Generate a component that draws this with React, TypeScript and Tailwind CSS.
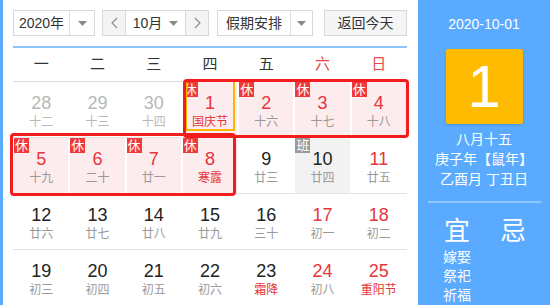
import React from "react";

type Day = {
  n: number;
  lunar: string;
  muted?: boolean;
  red?: boolean;
  lunarRed?: boolean;
  rest?: boolean;
  work?: boolean;
  selected?: boolean;
};

const rows: Day[][] = [
  [
    { n: 28, lunar: "十二", muted: true },
    { n: 29, lunar: "十三", muted: true },
    { n: 30, lunar: "十四", muted: true },
    { n: 1, lunar: "国庆节", red: true, lunarRed: true, rest: true, selected: true },
    { n: 2, lunar: "十六", red: true, rest: true },
    { n: 3, lunar: "十七", red: true, rest: true },
    { n: 4, lunar: "十八", red: true, rest: true },
  ],
  [
    { n: 5, lunar: "十九", red: true, rest: true },
    { n: 6, lunar: "二十", red: true, rest: true },
    { n: 7, lunar: "廿一", red: true, rest: true },
    { n: 8, lunar: "寒露", red: true, lunarRed: true, rest: true },
    { n: 9, lunar: "廿三" },
    { n: 10, lunar: "廿四", work: true },
    { n: 11, lunar: "廿五", red: true },
  ],
  [
    { n: 12, lunar: "廿六" },
    { n: 13, lunar: "廿七" },
    { n: 14, lunar: "廿八" },
    { n: 15, lunar: "廿九" },
    { n: 16, lunar: "三十" },
    { n: 17, lunar: "初一", red: true },
    { n: 18, lunar: "初二", red: true },
  ],
  [
    { n: 19, lunar: "初三" },
    { n: 20, lunar: "初四" },
    { n: 21, lunar: "初五" },
    { n: 22, lunar: "初六" },
    { n: 23, lunar: "霜降", lunarRed: true },
    { n: 24, lunar: "初八", red: true },
    { n: 25, lunar: "重阳节", red: true, lunarRed: true },
  ],
];

const weekDays = ["一", "二", "三", "四", "五", "六", "日"];

function Caret() {
  return (
    <svg width="9" height="5" viewBox="0 0 9 5">
      <path d="M0 0h9L4.5 5z" fill="#8a8a8a" />
    </svg>
  );
}

function Chevron({ dir }: { dir: "left" | "right" }) {
  return (
    <svg width="7" height="12" viewBox="0 0 7 12">
      <path
        d={dir === "left" ? "M6 1L1 6l5 5" : "M1 1l5 5-5 5"}
        fill="none"
        stroke="#8a8a8a"
        strokeWidth="1.1"
      />
    </svg>
  );
}

function Cell({ d }: { d: Day }) {
  const numColor = d.muted ? "text-[#b8b8b8]" : d.red ? "text-[#e5363c]" : "text-[#222]";
  const lunarColor = d.muted
    ? "text-[#b8b8b8]"
    : d.lunarRed
    ? "text-[#e5363c]"
    : "text-[#999]";
  const bg = d.rest ? "bg-[#fdeced]" : d.work ? "bg-[#f2f2f2]" : "";
  return (
    <div className="h-[56px] border-b border-[#e3e3e3]">
      <div className={`relative mx-px flex h-full flex-col items-center pt-[10px] ${bg}`}>
        {d.rest && (
          <span className="absolute left-0 top-0 flex h-[15px] w-[15px] items-center justify-center bg-[#f03a3a] text-[13px] leading-none text-white">
            休
          </span>
        )}
        {d.work && (
          <span className="absolute left-0 top-0 flex h-[15px] w-[15px] items-center justify-center bg-[#9a9a9a] text-[13px] leading-none text-white">
            班
          </span>
        )}
        {d.selected && (
          <span className="absolute left-[2px] top-[-2px] h-[51px] w-[50px] border-2 border-[#ffb400]" />
        )}
        <span className={`text-[18px] leading-[22px] ${numColor}`}>{d.n}</span>
        <span className={`text-[12px] leading-[16px] ${lunarColor}`}>{d.lunar}</span>
      </div>
    </div>
  );
}

export default function App() {
  return (
    <div
      className="flex h-[305px] w-[550px] overflow-hidden bg-white"
      style={{ fontFamily: '"Liberation Sans", "Noto Sans CJK SC", sans-serif' }}
    >
      <div className="w-[418px] shrink-0 border-l-[3px] border-[#5aabff] pl-[10px] pr-[11px] pt-[10px]">
        {/* controls */}
        <div className="flex h-[26px] text-[14px] text-[#333]">
          <div className="flex w-[82px] border border-[#d8d8d8]">
            <span className="flex w-[56px] items-center justify-center border-r border-[#e0e0e0]">
              2020年
            </span>
            <span className="flex flex-1 items-center justify-center">
              <Caret />
            </span>
          </div>
          <div className="ml-[7px] flex w-[107px] border border-[#d8d8d8]">
            <span className="flex w-[23px] items-center justify-center border-r border-[#d8d8d8] bg-[#f4f4f4]">
              <Chevron dir="left" />
            </span>
            <span className="flex flex-1 items-center justify-center gap-[7px]">
              10月
              <Caret />
            </span>
            <span className="flex w-[23px] items-center justify-center border-l border-[#d8d8d8] bg-[#f4f4f4]">
              <Chevron dir="right" />
            </span>
          </div>
          <div className="ml-[8px] flex w-[96px] border border-[#d8d8d8]">
            <span className="flex w-[73px] items-center justify-center border-r border-[#e0e0e0]">
              假期安排
            </span>
            <span className="flex flex-1 items-center justify-center">
              <Caret />
            </span>
          </div>
          <div className="ml-[11px] flex w-[83px] items-center justify-center border border-[#d8d8d8] bg-[#f5f5f5]">
            返回今天
          </div>
        </div>

        <div className="mt-[10px] h-[2px] bg-[#8cc4fb]" />

        {/* week header */}
        <div className="grid h-[34px] grid-cols-7 border-b border-[#dcdcdc] text-[15px]">
          {weekDays.map((w, i) => (
            <div
              key={w}
              className={`flex items-center justify-center ${i >= 5 ? "text-[#e5474c]" : "text-[#333]"}`}
            >
              {w}
            </div>
          ))}
        </div>

        {/* days */}
        <div className="relative">
          {rows.map((row, ri) => (
            <div key={ri} className="grid grid-cols-7">
              {row.map((d) => (
                <Cell key={`${ri}-${d.n}`} d={d} />
              ))}
            </div>
          ))}
          <div className="pointer-events-none absolute left-[170px] top-[-3px] h-[59px] w-[226px] rounded-[4px] border-[3px] border-[#f21d1d]" />
          <div className="pointer-events-none absolute left-[-3px] top-[51px] h-[63px] w-[226px] rounded-[4px] border-[3px] border-[#f21d1d]" />
        </div>
      </div>

      {/* side panel */}
      <div className="flex flex-1 flex-col items-center bg-[#5aabff] pt-[14px] text-white">
        <div className="text-[14px] leading-[20px]">2020-10-01</div>
        <div className="mt-[15px] flex h-[76px] w-[77px] items-center justify-center rounded-[2px] bg-[#ffbb00] text-[60px] font-light leading-none shadow-[0_1px_3px_rgba(0,0,0,0.15)]">
          1
        </div>
        <div className="mt-[5px] text-center text-[14px] leading-[20px]">
          <div>八月十五</div>
          <div>庚子年【鼠年】</div>
          <div>乙酉月 丁丑日</div>
        </div>
        <div className="mt-[12px] h-[2px] w-[113px] bg-[#8ec6ff]" />
        <div className="mt-[13px] flex w-full pl-[25px]">
          <div className="w-[57px]">
            <div className="pl-[1px] text-[26px] leading-[30px]">宜</div>
            <div className="mt-[2px] text-[14px] leading-[19px]">
              <div>嫁娶</div>
              <div>祭祀</div>
              <div>祈福</div>
            </div>
          </div>
          <div className="text-[26px] leading-[30px]">忌</div>
        </div>
      </div>
    </div>
  );
}
